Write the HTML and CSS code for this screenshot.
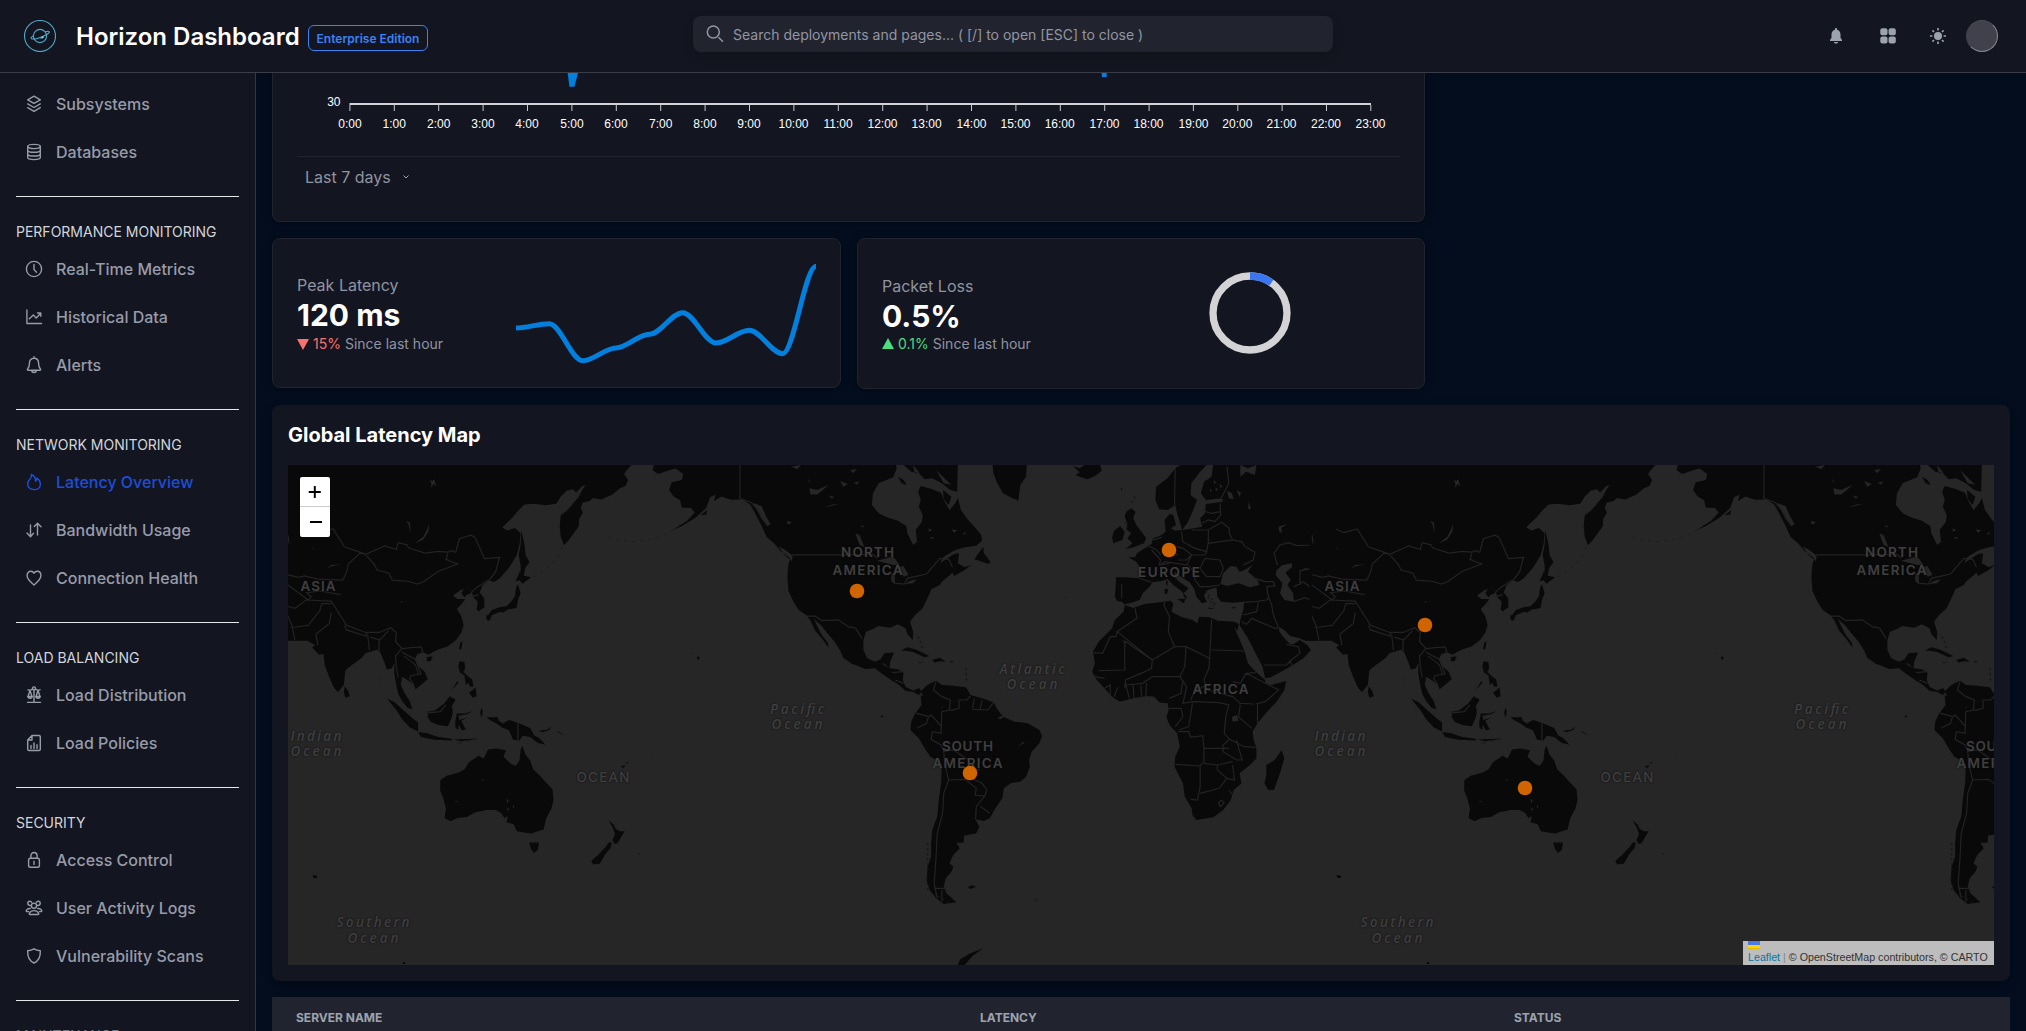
FILE: index.html
```html
<!DOCTYPE html>
<html lang="en">
<head>
<meta charset="utf-8">
<title>Horizon Dashboard</title>
<link rel="stylesheet" href="styles.css">
</head>
<body>
<header class="topbar">
  <div class="brand">
    <svg class="logo" viewBox="0 0 32 32"><circle cx="16" cy="16" r="15.5"/><circle cx="16" cy="16" r="6.600"/><path d="M9.800 15.600c-2.300 1.200-3.200 2.400-2.600 3 1.100.9 5.500.1 10.200-1.700 4.800-1.900 8.700-4.200 8-5.200-.4-.7-2-.5-4.300.1"/><path d="M16.500 18.400l3.500-1.700"/><circle class="dot" cx="18.500" cy="17.200" r="1"/></svg>
    <h1>Horizon Dashboard</h1>
    <span class="badge">Enterprise Edition</span>
  </div>
  <div class="search">
    <svg viewBox="0 0 18 18"><circle cx="7.300" cy="7" r="6"/><path d="M12.500 12.200l4.500 4.500"/></svg>
    <span>Search deployments and pages... ( [/] to open [ESC] to close )</span>
  </div>
  <div class="actions">
    <svg class="act-bell" viewBox="0 0 16 16"><path d="M8 0c.6 0 1 .4 1 1v.8c2.200.5 3.500 2.400 3.500 4.700v3.300L14 12v1H2v-1l1.500-2.200V6.500C3.500 4.200 4.800 2.300 7 1.800V1c0-.6.4-1 1-1zM5.800 14h4.400c-.3 1-1.200 1.600-2.200 1.600S6.100 15 5.800 14z"/></svg>
    <svg class="act-grid" viewBox="0 0 16 16"><rect x=".3" y=".3" width="7.200" height="7" rx="2"/><rect x="8.600" y=".3" width="7.200" height="7" rx="2"/><rect x=".3" y="8.600" width="7.200" height="7" rx="2"/><rect x="8.600" y="8.600" width="7.200" height="7" rx="2"/></svg>
    <svg class="act-sun" viewBox="0 0 16 16"><circle cx="8" cy="8" r="4"/><path class="rays" d="M8 0v2.400M8 13.600V16M0 8h2.400M13.600 8H16M2.400 2.400l1.600 1.600M12 12l1.600 1.600M2.400 13.600L4 12M12 4l1.600-1.600"/></svg>
    <span class="avatar"></span>
  </div>
</header>

<div class="shell">
<nav class="sidebar">
  <a class="item"><svg viewBox="0 0 18 18"><path d="M9 1.200l6.300 3.600L9 8.400 2.700 4.800zM2.700 8.900L9 12.500l6.300-3.600M2.700 12.700L9 16.300l6.300-3.600"/></svg>Subsystems</a>
  <a class="item"><svg viewBox="0 0 18 18"><ellipse cx="9" cy="3.500" rx="6.300" ry="2.100"/><path d="M2.700 3.500v11c0 1.300 2.800 2.100 6.300 2.100s6.300-.8 6.300-2.100v-11M2.700 7.200C2.700 8.500 5.500 9.300 9 9.300s6.300-.8 6.300-2.100M2.700 10.900c0 1.300 2.800 2.100 6.300 2.100s6.300-.8 6.300-2.100"/></svg>Databases</a>
  <hr>
  <h2>PERFORMANCE MONITORING</h2>
  <a class="item"><svg viewBox="0 0 18 18"><circle cx="9" cy="9" r="7.600"/><path d="M9 4.500V9.500l2.500 2.800"/></svg>Real-Time Metrics</a>
  <a class="item"><svg viewBox="0 0 18 18"><path d="M1.900 2v13.500H16.500M4.300 10.800l4-3.700 2.900 2.800 4.600-4.700M12.500 5h3.300v3.300"/></svg>Historical Data</a>
  <a class="item"><svg viewBox="0 0 18 18"><path d="M9 .8v1.500M9 2.300c-3 0-4.600 2.300-4.600 5.200 0 3-.8 4.400-1.800 5.500-.5.700-.1 1.300.7 1.300h11.400c.8 0 1.200-.6.7-1.300-1-1.100-1.800-2.500-1.800-5.500 0-2.900-1.600-5.200-4.600-5.200zM6.500 14.500c.3 1.300 1.200 2 2.500 2s2.200-.7 2.500-2"/></svg>Alerts</a>
  <hr>
  <h2>NETWORK MONITORING</h2>
  <a class="item active"><svg viewBox="0 0 18 18"><path d="M6.300 1.500c3 1.300 4.500 4 4.200 6.800 1-.7 1.600-1.900 1.500-3.300 2 1.500 3.400 3.700 3.400 6.200 0 3.200-2.700 5.400-6.400 5.400s-6.300-2.200-6.300-5.500c0-2.300 1-4 2.500-5.300 1.300-1.200 1.500-2.700 1.100-4.300z"/></svg>Latency Overview</a>
  <a class="item"><svg viewBox="0 0 18 18"><path d="M5.500 4v11.500M2 12l3.500 3.700L8.500 12.300M12.500 14V2.200M9.300 5.500l3.200-3.300L16 5.800"/></svg>Bandwidth Usage</a>
  <a class="item"><svg viewBox="0 0 18 18"><path d="M9 16c-1-1.300-6.900-5-6.900-9.500C2.100 4 3.700 2.300 5.700 2.300 7.200 2.300 8.400 3 9 4.200c.6-1.200 1.800-1.900 3.300-1.900 2 0 3.600 1.700 3.600 4.200C15.900 11 10 14.700 9 16z"/></svg>Connection Health</a>
  <hr>
  <h2>LOAD BALANCING</h2>
  <a class="item"><svg viewBox="0 0 18 18"><circle cx="9" cy="2.400" r="1.500"/><path d="M9 4v12M3 3.800c1.800.6 3.200.4 4.500-.8M15 3.800c-1.800.6-3.200.4-4.500-.8M5 4.500L3 10.500h4zM13 4.500l-2 6h4zM2.700 10.500c.3 1.300 1.200 1.700 2.300 1.700s2-.4 2.300-1.700M10.700 10.500c.3 1.300 1.200 1.700 2.300 1.700s2-.4 2.300-1.700M2.500 16.400h13"/></svg>Load Distribution</a>
  <a class="item"><svg viewBox="0 0 18 18"><path d="M7 1.500h7c.8 0 1.300.5 1.300 1.300v12.400c0 .8-.5 1.300-1.300 1.300H4c-.8 0-1.300-.5-1.300-1.300V6zM7 1.500V6H2.700M6 14.500v-3M9 14.500V9M12 14.500v-3.800"/></svg>Load Policies</a>
  <hr>
  <h2>SECURITY</h2>
  <a class="item"><svg viewBox="0 0 18 18"><rect x="3.600" y="7.300" width="10.800" height="9" rx="1.800"/><path d="M5.900 7.200V4.700c0-1.900 1.300-3.200 3.100-3.200s3.100 1.300 3.100 3.200v2.500M9 10.200v3.200"/></svg>Access Control</a>
  <a class="item"><svg viewBox="0 0 18 18"><circle cx="9" cy="6.700" r="2.600"/><path d="M5 15.500c-.7 0-.9-.6-.6-1.300.8-1.700 2.500-2.600 4.600-2.600s3.800.9 4.600 2.600c.3.700.1 1.300-.6 1.300zM5.400 6.500C3.500 6.500 2.800 5.400 2.800 4.200c0-1.200.9-2 2-2 .9 0 1.600.4 1.900 1.100M12.600 6.500c1.900 0 2.600-1.100 2.600-2.300 0-1.200-.9-2-2-2-.9 0-1.600.4-1.900 1.100M3.600 12.600H2c-.6 0-.9-.5-.7-1.100C1.800 10 3.200 9.300 5.200 9.500M14.400 12.600H16c.6 0 .9-.5.7-1.100-.5-1.500-1.900-2.200-3.900-2"/></svg>User Activity Logs</a>
  <a class="item"><svg viewBox="0 0 18 18"><path d="M9 1.800c2 1.200 4 1.700 6.300 1.900.3 5.800-1.500 10-6.300 12.300C4.200 13.700 2.400 9.500 2.700 3.700 5 3.500 7 3 9 1.800z"/></svg>Vulnerability Scans</a>
  <hr>
  <h2 class="faded">MAINTENANCE</h2>
</nav>

<main class="content">
  <section class="upper">
    <article class="card chart-card">
      <svg class="chart" viewBox="297 73 1103 83">
        <path class="series-fill" d="M567.700 73h10.300l-3.600 13.800h-5z"/>
        <path class="series-fill" d="M1101.700 73h5v4h-4.800z"/>
        <path class="axis" d="M349.500 104H1371"/>
        <path class="ticks" d="M349.900 105v6m44.400-6v6m44.400-6v6m44.400-6v6m44.400-6v6m44.400-6v6m44.400-6v6m44.400-6v6m44.400-6v6m44.400-6v6m44.400-6v6m44.400-6v6m44.400-6v6m44.400-6v6m44.400-6v6m44.400-6v6m44.400-6v6m44.400-6v6m44.400-6v6m44.300-6v6m44.400-6v6m44.300-6v6m44.400-6v6m44.300-6v6"/>
        <text x="340.500" y="105.500" text-anchor="end">30</text>
        <g text-anchor="middle">
          <text x="350" y="128">0:00</text><text x="394.300" y="128">1:00</text><text x="438.700" y="128">2:00</text><text x="483" y="128">3:00</text><text x="527" y="128">4:00</text><text x="572" y="128">5:00</text><text x="616" y="128">6:00</text><text x="660.800" y="128">7:00</text><text x="705" y="128">8:00</text><text x="749" y="128">9:00</text><text x="793.500" y="128">10:00</text><text x="838" y="128">11:00</text><text x="882.500" y="128">12:00</text><text x="926.600" y="128">13:00</text><text x="971.500" y="128">14:00</text><text x="1015.500" y="128">15:00</text><text x="1059.700" y="128">16:00</text><text x="1104.500" y="128">17:00</text><text x="1148.500" y="128">18:00</text><text x="1193.500" y="128">19:00</text><text x="1237.300" y="128">20:00</text><text x="1281.500" y="128">21:00</text><text x="1326" y="128">22:00</text><text x="1370.500" y="128">23:00</text>
        </g>
      </svg>
      <div class="range">Last 7 days<svg viewBox="0 0 6 4"><path d="M.5.5L3 3 5.500.5"/></svg></div>
    </article>
    <div class="stats">
      <article class="card stat">
        <div class="stat-text">
          <p class="label">Peak Latency</p>
          <p class="value">120 ms</p>
          <p class="delta low"><svg class="down" viewBox="0 0 11 10"><path d="M0 0h11L5.500 10z"/></svg><span class="red">15%</span> Since last hour</p>
        </div>
        <svg class="spark" viewBox="516 260 300 106"><path d="M516 328C527 328 538 323.700 549.300 323.700C560.500 323.700 571.500 360.700 582.700 360.700C593.800 360.700 605 348 616 348C627 348 638 334.300 649.300 334.300C660.500 334.300 671.500 312.700 682.700 312.700C693.800 312.700 705 343 716 343C727 343 738 330.300 749.300 330.300C760.500 330.300 771.500 353.700 782.700 353.700C793.800 353.700 805 266.200 816 266.200"/></svg>
      </article>
      <article class="card stat stat-loss">
        <div class="stat-text">
          <p class="label">Packet Loss</p>
          <p class="value">0.5%</p>
          <p class="delta"><svg viewBox="0 0 11 10"><path class="up" d="M0 10h11L5.500 0z"/></svg><span class="green">0.1%</span> Since last hour</p>
        </div>
        <svg class="donut" viewBox="0 0 82 82"><circle class="ring" cx="41" cy="41" r="37"/><circle class="arc" cx="41" cy="41" r="37" pathLength="100" stroke-dasharray="9.800 90.200" transform="rotate(-90 41 41)"/></svg>
      </article>
    </div>
  </section>

  <section class="map-card">
    <h3>Global Latency Map</h3>
    <div class="map">
      <svg class="world" viewBox="288 465 1706 500">
        <defs>
          <g id="world">
            <g transform="translate(270 400) scale(.38265 .36037)">
              <path class="land" d="M40 170H955L945 180 932 195 925 205 936 222 930 238 915 245 895 262 865 276 845 272 835 280 817 285 812 300 818 312 808 330 807 350 795 368 780 390 768 403 760 380 757 350 760 320 775 308 790 290 806 270 813 255 822 240 826 235 815 240 800 257 792 248 775 252 760 268 748 288 720 292 690 288 665 290 650 305 635 325 607 353 620 362 640 355 655 370 652 400 645 430 625 465 600 495 585 505 572 500 555 515 548 535 560 550 560 575 545 587 540 580 543 560 532 548 528 535 515 540 508 548 500 535 507 525 498 527 478 543 490 552 510 552 502 565 488 580 500 600 506 625 500 645 487 665 465 683 440 692 425 700 415 707 400 700 385 705 378 720 388 738 405 755 412 775 395 790 380 803 377 790 360 778 345 768 342 790 350 810 365 835 372 858 360 855 345 835 335 815 330 790 325 760 325 730 318 745 305 748 298 725 288 700 280 693 265 698 250 702 240 715 215 735 197 750 193 790 178 810 168 800 155 770 143 735 140 705 128 707 110 687 118 680 97 668H40z
              M657 362L665 400 668 430 678 450 668 465 663 485 655 490 655 460 650 430 655 400z M653 475L665 488 682 492 672 500 660 510 652 500 642 503z M648 512L655 535 648 555 644 577 620 582 610 590 600 588 585 595 568 600 580 583 600 575 618 572 630 560 640 545 643 520z M565 597L580 597 573 613 566 610z
              M503 668L500 692 494 690 497 675z M410 713L425 712 420 725 410 725z M195 795L205 808 208 822 197 826 193 810z
              M495 725L508 727 510 745 505 755 518 767 510 765 497 757 492 740z M520 812L528 806 537 798 540 822 530 826 524 817z M508 765L515 765 528 775 532 795 523 795 518 785 512 790z M492 785L475 805 490 780z
              M307 830L325 838 350 862 375 885 387 895 387 920 365 908 345 885 330 860z M387 921L410 925 440 935 475 940 475 945 430 943 395 935z M480 942L510 941 545 940 500 947z M485 950L515 958 490 952z
              M412 865L430 862 455 842 470 822 485 832 475 850 478 865 475 880 465 905 440 902 420 893 412 880z M488 870L510 870 530 863 515 872 492 876 495 888 514 882 500 890 512 915 500 916 493 900 492 915 485 910 484 895z M552 855L556 862 554 882 549 870z
              M565 880L595 880 598 890 608 898 625 888 650 897 680 910 690 930 703 938 720 957 700 952 680 935 660 932 652 945 635 943 625 917 605 908 595 900 575 888z M703 918L725 915 735 905 730 916 712 922z M750 918L770 930 755 924z M775 935L785 945 778 938z M790 945L807 960 795 950z
              M445 1055L462 1043 490 1035 508 1025 520 1005 545 987 558 995 570 970 592 967 617 972 610 990 630 1010 643 1015 652 1000 655 970 660 960 668 985 680 1000 688 1025 705 1042 720 1060 738 1080 741 1110 735 1135 722 1160 715 1192 700 1197 682 1203 665 1200 645 1197 637 1177 618 1172 622 1155 612 1160 605 1147 590 1138 565 1138 535 1145 515 1157 490 1160 472 1169 456 1160 460 1135 453 1105 445 1085z M677 1228L703 1228 700 1248 690 1257 682 1245z
              M885 1166L898 1178 903 1190 915 1197 927 1197 918 1212 908 1230 900 1232 895 1220 902 1205 896 1188z M893 1228L890 1243 875 1262 862 1287 845 1289 839 1280 858 1262 878 1240 885 1228z
              M1116 712l7 2-2 7-5-3z M1103 701l6 3-5-1z M918 1016l8-3 2 5-8 3z M928 1008l9-4-4 5z M112 1318l12 3-3 6-8-1z M345 1564l7-6 2 8z M994 984l5 3-4-2z M834 1338l3 2-3 1z M963 1258l4 2-4 2z
              M1005 170L1000 195 1015 205 1035 198 1060 190 1080 205 1076 222 1050 228 1043 250 1055 268 1072 278 1076 298 1100 300 1110 312 1090 335 1050 362 1075 350 1110 328 1140 300 1150 270 1165 262 1160 280 1180 268 1205 277 1235 276 1255 290 1268 315 1285 350 1298 380 1318 398 1335 420 1360 440 1355 455 1352 490 1355 530 1368 560 1382 583 1402 597 1412 612 1425 640 1445 665 1460 688 1457 672 1442 652 1430 628 1422 608 1440 625 1455 645 1475 670 1490 695 1498 715 1525 735 1525 170z
              M1262 285L1285 295 1295 320 1308 345 1300 350 1285 330z M1328 405L1350 418 1366 432 1364 447 1345 430z M1125 320L1143 305 1140 318z"/>
              <path class="land-dash" d="M764 407C755 440 730 465 685 494M885 380C930 398 985 400 1055 362M290 765L290 790M495 950L540 945"/>
              <path class="lake" d="M416 342L414 365 400 388 378 398 400 380 410 360z M356 335L366 340 367 372 362 345z M147 470L160 458 187 456 160 462z M416 222l8 3 8-6-2 8 5 12-8-6-6 12 1-14z M112 410l4 2-3 3z M342 558l6 2-4 3z M618 1105l6 8-4 6z M634 1123l5 4-2 8z M618 1130l8 7-6 2z M554 1052l6 1-5 4z M485 1112l6 2-6 3z M1410 245L1430 250 1460 235 1445 250 1430 262 1412 262z M1448 298L1470 290 1488 288 1465 295z M1362 185l25-5-8 12z M1350 335l14 5-10 6z M1460 265l15 4-7 5z M1490 225l20 8-12 8z M1405 218l10 12-6-2z"/>
              <path class="border" d="M47 375L50 398M47 485L75 492 90 488 130 498 190 500 200 478 205 455 235 425 250 428 235 422 195 408 165 358 130 368 110 358M250 428L300 405 330 415 335 396 358 402 362 410 405 425 440 420 465 422 475 418 485 423M485 423L495 385 525 375 535 380 550 415 560 440 600 437 590 475 575 498 570 500 540 520 525 535M250 430L272 455 280 472 310 480 320 500 360 503 385 511 400 505 440 475 490 455 460 442 465 425M47 513L100 555 108 545 95 535 130 530 185 540M47 573L65 578 95 555 160 558 185 600 200 625 250 645 285 645 315 632 330 645 328 670 345 690 370 687 395 685 400 700M55 632L100 625 130 585 135 565 160 565M47 600L57 625 65 665M160 590L155 620 120 650 125 680M195 625L200 638 250 655 252 645M255 650L260 695M262 658L285 665 285 700M285 668L310 640M345 690L328 710 330 740 335 770M345 700L380 720 395 760 368 765 365 775 375 787M350 710L380 735 388 760M530 545L545 540M648 897V945M412 868L445 865 460 845M1228 170V273L1258 285 1275 305 1298 345M1365 429.500H1530M1402 600L1425 600 1442 612 1485 610 1515 632 1530 635"/>
            </g>
            <g transform="translate(850 450) scale(.38265 .33333)">
              <path class="land" d="M0 40H120L122 55 113 82 95 90 75 100 60 130 57 165 75 190 100 203 125 212 147 228 150 250 165 285 175 275 172 240 188 215 190 195 180 170 185 150 178 125 185 108 215 118 238 128 245 150 260 180 275 160 282 145 290 180 305 205 325 230 343 255 345 272 330 287 300 292 275 300 245 320 235 340 272 312 285 310 282 340 300 352 316 345 300 360 272 378 268 368 240 395 235 405 213 418 200 450 190 475 170 495 157 515 165 545 164 570 150 552 145 535 125 523 105 533 75 528 60 537 42 545 35 570 35 600 45 625 65 635 80 628 90 610 115 607 105 635 103 655 125 658 140 668 138 690 145 710 165 722 180 714 188 725 180 735 165 726 145 722 125 702 110 692 85 672 65 655 40 657 0 638z
              M325 328L348 290 350 310 367 335 362 342 345 335z M135 40H282L280 125 262 120 240 100 215 85 195 88 180 70 160 65z M125 80L140 90 148 105 135 100z M243 120L265 140 258 165 245 148z
              M372 40H462L460 80 445 105 440 152 425 145 400 130 385 100 375 70z M583 48L600 55 620 40H652L658 62 640 78 620 88 600 80 590 75 600 67z
              M133 602L150 592 175 600 207 618 195 622 165 606 145 602z M215 630L235 623 250 635 232 634 222 638z M260 634l12 1-6 3z M178 635l14 3-12 0z
              M188 720L205 703 225 692 240 705 270 707 303 712 315 735 345 745 375 757 385 778 400 800 430 815 465 820 495 840 502 858 495 880 475 905 468 930 470 950 460 980 445 995 420 1000 402 1015 398 1045 380 1075 365 1105 350 1113 328 1108 338 1130 330 1150 298 1157 297 1178 278 1178 287 1195 270 1215 260 1240 270 1250 265 1265 250 1285 245 1310 252 1330 278 1357 245 1362 225 1345 208 1320 200 1290 203 1250 212 1220 212 1180 215 1140 228 1100 232 1050 238 1000 240 950 235 935 210 920 195 895 180 865 158 840 160 815 168 795 187 765 185 740z
              M308 1312L318 1306 330 1310 315 1317z M481 1344L495 1356 485 1350z M282 1545L288 1528 315 1510 348 1495 320 1518 300 1545z M1270 1276l14 3-6 6z M80 796l8 3-5 4z
              M718 465L740 474 770 462 800 458 838 452 845 462 840 485 865 500 895 510 908 520 912 500 940 502 960 512 1005 515 1016 522 1012 542 1003 530 1015 560 1030 600 1040 640 1060 665 1085 690 1085 700 1100 705 1140 693 1135 720 1115 755 1090 785 1065 820 1052 845 1055 870 1062 895 1062 925 1045 945 1018 970 1023 1000 1003 1020 995 1050 975 1080 950 1102 905 1110 895 1095 893 1075 875 1040 870 1000 848 950 850 920 862 890 855 850 835 825 827 800 833 780 830 760 810 758 795 740 775 738 740 745 705 755 685 740 665 715 645 690 633 665 640 640 635 605 650 575 685 535 692 510 715 485z
              M1128 900L1135 925 1125 965 1108 1020 1093 1020 1083 1000 1088 975 1088 945 1110 930z
              M735 175L746 185 740 205 750 228 765 250 774 265 768 280 745 290 720 298 738 280 725 265 735 250 722 238 725 220 718 200 722 185z M706 228L718 245 712 270 688 280 685 262 690 242z M855 447L877 446 872 460z M822 416L832 418 828 433 822 430z M826 392l4 0 0 16-4-6z M935 473l20 2-15 2z M997 473l12-3-6 6z M710 112l2 8-4 0z M563 440l4 3-4 0z
              M870 40L850 55 830 85 800 110 798 150 808 178 830 180 850 165 855 190 868 240 882 218 895 185 907 150 890 135 892 100 915 65 940 35H950L945 80 925 95 917 130 930 150 972 145 975 155 930 162 928 190 915 205 920 230 900 235 870 240 850 242 838 235 852 225 845 195 835 192 822 210 825 245 810 258 792 265 788 282 770 295 750 310 745 322 727 322 748 335 757 350 755 385 720 382 695 382 695 400 692 440 698 453 710 455 718 463 735 458 757 450 765 430 785 408 790 397 815 393 830 387 845 405 865 422 880 440 878 448 870 432 885 415 860 395 845 378 850 365 865 380 888 397 900 418 905 440 920 460 932 456 925 435 935 420 958 412 960 440 970 455 1000 458 1030 455 1028 480 1020 510 1018 525 1040 565 1060 610 1078 650 1085 685 1100 682 1150 650 1185 625 1205 600 1195 585 1175 570 1160 582 1150 582 1135 565 1122 545 1120 530 1135 540 1150 558 1175 565 1190 572 1215 572 1215 40z"/>
              <path class="lake" d="M968 402L975 370 995 348 1010 350 1018 366 1035 358 1052 344 1040 365 1065 390 1070 405 1045 412 1015 400 985 408z M1115 360L1130 345 1155 340 1155 352 1138 368 1152 390 1143 405 1158 430 1160 455 1135 450 1124 430 1130 400 1112 375z M985 122L998 130 1003 148 990 145z M1020 45L1040 55 1062 45 1058 75 1035 65 1020 80z M1010 120l12 8-4 12z M70 332L95 325 112 318 130 345 112 345 95 340z M108 370L116 368 118 402 108 395z M122 352L140 348 153 375 140 380z M143 402L158 392 175 388 165 400z M14 250L25 255 38 292 25 285z M998 800L1012 795 1015 812 1000 815z M150 75l15 20-10 0z M165 45l18 25-15-5z M225 60l40 45-20-5z M385 805l12-8 6 3-10 8z M438 890l14-14 5 2-12 8z M1042 155l6 22-8 0z M1120 230l22-8-15 12 2 15-8-5z M0 60l18-3-10 12z M10 98l14-4-6 10z M205 235l10 6-8 4z M265 238l15 3-8 7z M30 225l8 5-8 2z M210 260l10 3-9 5z M295 250l9-4-5 8z M950 90l8 8-6 3z M965 100l9 10-6 3z M955 112l8 8-7 2z M940 115l6 8-5 2z"/>
              <path class="coast-dash" d="M920 410L935 430 955 465M240 770V780M745 140L735 160M178 560L190 595M303 655L305 700M203 1180L203 1320M220 1330L260 1360M720 215L728 240M935 440L950 470"/>
              <path class="border" d="M-5 314H60L72 325M118 400L143 402 150 385 200 372 235 325 258 328 268 352M0 530L15 535 32 567M85 640L98 650M110 668L138 665M118 690L140 700M185 728L190 738
              M225 695L218 720 240 740 262 750 260 780 240 785 238 850M262 782L285 775 285 750 305 750 315 738M325 745L320 775M345 750L340 780M375 757L360 780 320 778M168 788L205 800 212 795 240 830M205 800L200 820 175 835M240 850L215 845 212 868 238 885 245 905 248 945 258 990M245 905L270 900 310 930 315 955 340 960M258 990L300 988 330 1015 327 1035 352 1038 358 1020 345 1000 318 985M352 1038L330 1070 328 1108M340 1068L365 1090M258 990L245 1030 242 1090 228 1150 225 1220 220 1300 228 1345M220 1315H248M240 1320V1355
              M710 402V445M755 384L788 397M788 300L812 330 808 345 835 340M792 270L815 262M850 55L848 165M985 50L990 100 970 145
              M745 475L750 505 698 545 790 630 848 590 832 545 835 500 820 465 823 455M848 590L878 590 940 625 945 508M945 600L1035 603M698 545L695 560H680L660 610 637 608M712 573H718V660L650 662M718 573L790 630M790 630L788 655 765 668 720 690 718 715M878 590L875 650 862 680 790 680M940 625L938 655 925 690 930 705M870 690L865 730 835 745M862 680L880 710 870 760 895 755 965 758M930 705L900 725 890 750M720 700L730 745M740 705L742 745M760 705L762 740M775 700L773 740M690 740L700 712M640 680L665 685M665 715L680 705 680 735M720 705L765 700 790 680M935 720L1000 740 1020 760 1055 762M1000 695L1020 700 1035 670 1060 668M1035 670L1120 720 1085 755 1060 762M1065 760V820M1020 765L1015 800 1050 835M965 758L990 765 982 800 978 850 992 868 1030 890 1060 892M833 775H865L870 800 850 830M895 760L885 830 860 840M858 845L885 845 890 862 922 857 925 895 990 895M925 895L925 935 915 948 850 943M990 870L975 885 975 905 1010 930 1025 930 1010 870M925 940L960 945 1000 935M915 950V1010L908 1050 890 1048M915 1030L965 1015 985 985 960 960 960 945M985 985L1005 990 1000 945M990 1020L1000 1035M963 1060L970 1050 978 1058 968 1070z"/>
            </g>
            <path class="border" transform="translate(1140 465) scale(.33333)" d="M412 300L402 265 420 240 445 233 470 242 510 240 525 215 522 205 560 190 605 180 612 200 630 210 655 192 685 230 720 240 725 260 748 265M480 360V318L505 312 530 330 560 340 585 350 600 380M480 318L500 310M462 365L490 350 515 370 540 390 580 400
            M460 410L495 398 525 412 520 440 530 470 525 490 545 520M525 430L550 420 580 405 612 402M612 410L605 440 575 465 565 480 530 485
            M345 340L375 350 400 350 405 362 380 365M380 365L385 395 395 420 400 450 415 485M310 412L345 410 380 405 388 395M355 412L350 440 310 450M305 470L320 478 335 460 405 490 415 488M372 600L440 600 450 588 480 565 475 545 440 538M450 588L460 610
            M125 200L128 230 165 250 200 260 205 230 205 195 155 195M205 195L245 172 268 190 268 205 278 225 240 230 205 235M278 225L305 230 315 245 345 262 340 285 310 300M200 260L195 270 155 270 130 250 110 245M155 270L140 285 115 285M110 295L140 300 155 270M195 280L240 285 250 310 240 335 200 335 180 310 195 280M165 345L180 365 205 365 240 360M185 175L205 165 225 170 242 150 240 115M190 138L215 145 240 140M145 300L160 320 165 345M115 270L95 262M60 300L75 290 110 295M20 240L50 255 62 270"/>
          </g>
        </defs>
        <use href="#world"/><use href="#world" x="1024"/>
        <g id="labels-copy" class="place">
          <text x="318" y="591" textLength="35">ASIA</text>
          <text x="867.500" y="557" textLength="53">NORTH</text>
          <text x="867.500" y="574.500" textLength="70">AMERICA</text>
          <text x="967.500" y="751" textLength="51">SOUTH</text>
          <text x="967.500" y="768" textLength="70">AMERICA</text>
          <text class="thin" x="603" y="782" textLength="53">OCEAN</text>
          <g class="sea">
            <text x="316" y="741" textLength="51">Indian</text><text x="316" y="756" textLength="51">Ocean</text>
            <text x="797" y="714" textLength="54">Pacific</text><text x="797" y="729" textLength="51">Ocean</text>
            <text x="373" y="927" textLength="73">Southern</text><text x="373" y="942.500" textLength="51">Ocean</text>
          </g>
        </g>
        <use href="#labels-copy" x="1024"/>
        <g class="place">
          <text x="1169" y="577" textLength="62">EUROPE</text>
          <text x="1220.500" y="694" textLength="56">AFRICA</text>
          <g class="sea"><text x="1032" y="673.500" textLength="65">Atlantic</text><text x="1032" y="689" textLength="51">Ocean</text></g>
        </g>
        <g class="pins"><circle cx="857" cy="591" r="7.300"/><circle cx="1169" cy="550" r="7.300"/><circle cx="1425" cy="625" r="7.300"/><circle cx="970" cy="773" r="7.300"/><circle cx="1525" cy="788" r="7.300"/></g>
      </svg>
      <div class="zoom"><svg viewBox="0 0 30 30"><path d="M8.500 15.500h12.500M14.800 9.300v12.500"/></svg><svg viewBox="0 0 30 30"><path d="M10 15h12"/></svg></div>
      <div class="credit"><svg viewBox="0 0 12 8"><path fill="#4c7be1" d="M0 0h12v4H0z"/><path fill="#ffd500" d="M0 4h12v3H0z"/><path fill="#e0bc00" d="M0 7h12v1H0z"/></svg><p><a>Leaflet</a> <i>|</i> © OpenStreetMap contributors, © CARTO</p></div>
    </div>
  </section>

  <section class="table-head"><span>SERVER NAME</span><span>LATENCY</span><span>STATUS</span></section>
</main>
</div>
</body>
</html>
```
FILE: styles.css
```css
* { box-sizing: border-box; }
body {
  margin: 0; height: 1031px; overflow: hidden;
  background: #030d1e; color: #fff;
  font-family: Inter, "Liberation Sans", sans-serif;
  display: flex; flex-direction: column;
}
h1, h2, h3, p { margin: 0; }
svg { display: block; flex: none; }

.topbar {
  flex: none; height: 73px; padding: 0 28px 0 24px;
  display: grid; grid-template-columns: 669px 640px 1fr;
  background: #131520; border-bottom: 1px solid #3a3c47;
}
.brand { display: flex; align-items: center; }
.logo { width: 32px; height: 32px; margin-right: 20px; fill: none; stroke: #4fa9c9; stroke-width: 1.1; }
.logo .dot { fill: #7fdcf5; stroke: none; }
.brand h1 { padding-top: 1px; font-size: 24px; line-height: 32px; font-weight: 600; width: 223px; white-space: nowrap; }
.badge {
  margin: 4px 0 0 9px; width: 120px; height: 26px;
  border: 1px solid #3b82f6; border-radius: 6px;
  font-size: 12px; line-height: 26px; font-weight: 600; color: #3b82f6; text-align: center; white-space: nowrap;
}
.search {
  margin-top: 16px; height: 36px; border-radius: 8px; padding-left: 13px;
  display: flex; align-items: center; gap: 9px;
  background: #21232e; color: #9296a3; font-size: 14px;
  box-shadow: 0 4px 12px rgba(0, 0, 0, .16);
}
.search svg { width: 18px; height: 18px; fill: none; stroke: #9296a3; stroke-width: 1.5; }
.actions { display: flex; align-items: center; justify-content: flex-end; fill: #9ca3af; }
.actions svg { width: 16px; height: 16px; }
.act-bell { margin-right: 36px; }
.act-grid { margin-right: 34px; }
.act-sun { margin-right: 20px; }
.rays { stroke: #9ca3af; stroke-width: 1.6; }
.avatar { width: 32px; height: 32px; border-radius: 50%; background: #40414c; border: 1px solid; border-color: #4b4b50 #85878f #85878f #40414c; }

.shell { flex: 1; min-height: 0; display: grid; grid-template-columns: 256px 1fr; }
.sidebar { overflow: hidden; padding: 7px 16px 0; background: #131520; border-right: 1px solid #343742; }
.item { display: flex; align-items: center; height: 48px; padding-left: 9px; gap: 13px; font-size: 16px; font-weight: 500; color: #989ca9; white-space: nowrap; }
.item svg { width: 18px; height: 18px; fill: none; stroke: currentColor; stroke-width: 1.4; stroke-linejoin: round; stroke-linecap: round; }
.item.active { color: #1d4ed8; }
.sidebar hr { height: 1px; margin: 20px 0 25px; border: 0; background: #e5e7eb; }
.sidebar h2 { height: 20px; margin-bottom: 3px; font-size: 14px; line-height: 20px; font-weight: 400; color: #d1d5db; white-space: nowrap; }
.sidebar h2.faded { color: #777a84; }

.content { min-width: 0; overflow: hidden; padding: 0 16px; display: flex; flex-direction: column; gap: 16px; }
.upper { width: 1153px; display: flex; flex-direction: column; gap: 16px; }
.card { background: #131520; border: 1px solid #21232e; border-radius: 8px; box-shadow: 0 1px 8px rgba(0, 0, 0, .3); }
.chart-card { height: 149px; border-top: 0; border-radius: 0 0 8px 8px; padding: 0 24px; }
.chart { width: 1103px; height: 83px; font: 12px "Liberation Sans", Arial, sans-serif; fill: #fff; }
.chart .series-fill { fill: #0380de; }
.axis { stroke: #d3d3d6; stroke-width: 2; }
.ticks { stroke: #c8c8cc; stroke-width: 1; fill: none; }
.range { display: flex; align-items: center; gap: 12px; height: 41px; padding-left: 8px; border-top: 1px solid #21232e; color: #9094a0; font-size: 16px; }
.range svg { width: 6px; height: 4px; fill: none; stroke: #b0b3bc; stroke-width: .9; }

.stats { display: grid; grid-template-columns: 569px 568px; gap: 16px; align-items: start; }
.stat { height: 150px; padding: 0 24px; display: flex; align-items: center; justify-content: space-between; }
.stat-loss { height: 151px; padding-right: 133px; }
.label { font-size: 16px; line-height: 24px; color: #9094a0; }
.value { font-size: 30px; line-height: 36px; font-weight: 700; }
.delta { display: flex; align-items: center; gap: 4px; font-size: 14px; line-height: 20px; color: #9094a0; white-space: nowrap; }
.delta.low { padding-top: 1px; margin-bottom: -1px; }
.delta svg { width: 12px; height: 11px; }
.down { fill: #f87171; }
.up { fill: #4ade80; }
.red { color: #f87171; }
.green { color: #4ade80; }
.spark { width: 300px; height: 106px; fill: none; stroke: #0380de; stroke-width: 5; }
.donut { width: 82px; height: 82px; margin-bottom: 2px; fill: none; stroke-width: 7.300; }
.ring { stroke: #d3d3d6; }
.arc { stroke: #3b76f0; }

.map-card { height: 576px; padding: 16px; border-radius: 8px; background: #131520; box-shadow: 0 4px 10px rgba(0, 0, 0, .3); }
.map-card h3 { height: 44px; font-size: 20px; line-height: 28px; font-weight: 700; }
.map { position: relative; width: 1706px; height: 500px; overflow: hidden; background: #262626; }
.world { width: 1706px; height: 500px; }
.land { fill: #090909; }
.lake { fill: #262626; }
.border { fill: none; stroke: #232323; stroke-width: 1.2; vector-effect: non-scaling-stroke; }
.land-dash { fill: none; stroke: #1a1a1a; stroke-width: .8; stroke-dasharray: 3 5; vector-effect: non-scaling-stroke; }
.coast-dash { fill: none; stroke: #151515; stroke-width: 1.5; stroke-dasharray: 2 3; vector-effect: non-scaling-stroke; }
.place { font: 600 13.5px Inter, "Open Sans", sans-serif; fill: #3f3f3f; text-anchor: middle; }
.place .thin { font-weight: 500; }
.place .sea { font: italic 600 13.5px "Open Sans", "Noto Sans", sans-serif; }
.place text { text-shadow: 0 0 2px #0c0c0c; }
.pins { fill: #cf6400; }
.zoom { position: absolute; left: 12px; top: 12px; width: 30px; height: 60px; border-radius: 2px; background: #fff; }
.zoom svg { width: 30px; height: 30px; stroke: #000; stroke-width: 2; }
.zoom svg:first-child { border-bottom: 1px solid #ccc; }
.credit { position: absolute; right: 0; bottom: 0; width: 251px; height: 24px; padding-left: 5px; background: #bdbdbd; color: #333; font: 10.7px/15px "Liberation Sans", Arial, sans-serif; white-space: nowrap; }
.credit svg { width: 12px; height: 8px; margin-bottom: 1px; }
.credit a { color: #0078a8; }
.credit i { color: #888; font-style: normal; }

.table-head { height: 48px; flex: none; padding: 0 24px; display: grid; grid-template-columns: 684px 534px 1fr; background: #21232e; color: #9ca3af; font-size: 12px; line-height: 41px; font-weight: 700; }
```
